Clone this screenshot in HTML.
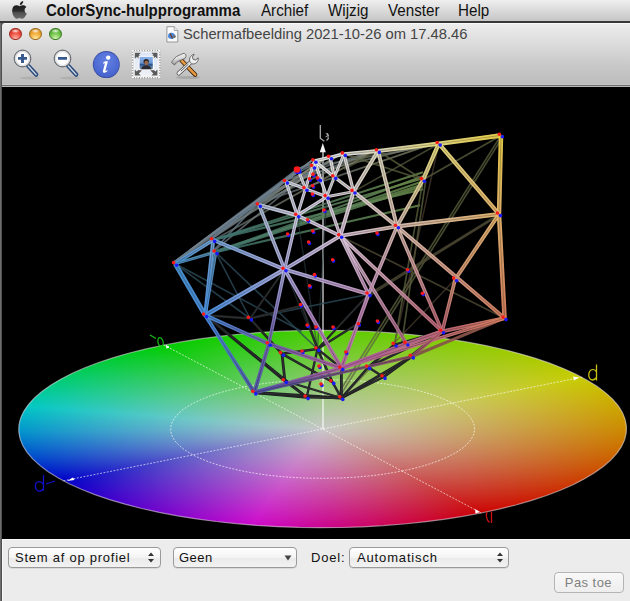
<!DOCTYPE html>
<html><head><meta charset="utf-8"><style>
*{margin:0;padding:0;box-sizing:border-box}
html,body{width:630px;height:601px;overflow:hidden;background:#6a6a6a;font-family:"Liberation Sans",sans-serif}
#menubar{position:absolute;left:0;top:0;width:630px;height:21px;background:linear-gradient(#efefef,#dadada 50%,#c6c6c6)}
#menuline{position:absolute;left:0;top:21px;width:630px;height:2px;background:#383838}
.mi{position:absolute;top:2px;font-size:16px;color:#111;line-height:18px;white-space:nowrap;transform-origin:0 0;transform:scaleX(0.948)}
#leftstrip{position:absolute;left:0;top:23px;width:2px;height:578px;background:linear-gradient(90deg,#6e6e6e 0,#6e6e6e 1px,#505050 1px)}
#win{position:absolute;left:2px;top:23px;width:640px;height:578px;border-radius:4px 4px 0 0;overflow:hidden;background:#ececec}
#toolbar{position:absolute;left:0;top:0;width:100%;height:61px;background:linear-gradient(#ededed 0,#e2e2e2 20%,#c8c8c8 70%,#bcbcbc 100%);border-top:1px solid #fafafa}
#tbl1{position:absolute;left:0;top:60px;width:100%;height:1px;background:#c4c4c4}
#tbl2{position:absolute;left:0;top:61px;width:100%;height:1px;background:#6e6e6e}
#tbl3{position:absolute;left:0;top:62px;width:100%;height:2px;background:#b4b4b4}
#canvas{position:absolute;left:0;top:64px;width:100%;height:452px;background:#000;overflow:hidden}
#bottom{position:absolute;left:0;top:516px;width:100%;height:62px;background:#ececec;border-left:1px solid #f8f8f8;border-top:1px solid #fafafa}
.btn{position:absolute;border-radius:4px;border:1px solid #9a9a9a;background:linear-gradient(#ffffff,#f4f4f4 50%,#eaeaea 51%,#f2f2f2);box-shadow:0 0.5px 0.5px rgba(0,0,0,0.15)}
.bt{position:absolute;font-size:13px;color:#111;line-height:15px;white-space:nowrap}
.tl{position:absolute;top:3.5px;width:12.5px;height:12.5px;border-radius:50%}
</style></head><body>
<div id="menubar">
 <svg style="position:absolute;left:0;top:0" width="40" height="22" viewBox="0 0 40 22"><defs><linearGradient id="apg" x1="0" y1="0" x2="0" y2="1"><stop offset="0" stop-color="#1c1c1c"/><stop offset="0.42" stop-color="#2c2c2c"/><stop offset="0.55" stop-color="#505050"/><stop offset="1" stop-color="#6c6c6c"/></linearGradient></defs><path d="M19.5 6.3C17.5 4.8 13.8 4.8 12.6 8.0C11.6 10.8 12.3 14.5 14.2 17.0C15.3 18.6 16.5 19.2 17.8 18.6C18.8 18.1 20.2 18.1 21.2 18.6C22.5 19.2 23.7 18.6 24.8 17.0C25.6 15.8 26.3 14.7 26.9 13.6C24.4 12.6 23.6 8.6 26.4 6.9C25.0 4.9 21.8 4.8 19.5 6.3Z" fill="url(#apg)"/><path d="M19.8 5.0C19.6 3.0 21.0 1.2 23.3 0.9C23.3 3.0 21.9 4.7 19.8 5.0Z" fill="#1c1c1c"/></svg>
 <div class="mi" style="left:46px;font-weight:bold;transform:scaleX(0.938)">ColorSync-hulpprogramma</div>
 <div class="mi" style="left:261px">Archief</div>
 <div class="mi" style="left:328px">Wijzig</div>
 <div class="mi" style="left:388px">Venster</div>
 <div class="mi" style="left:458px">Help</div>
</div>
<div id="menuline"></div>
<div id="leftstrip"></div>
<div id="win">
 <div id="toolbar">
  <div class="tl" style="left:7.2px;background:radial-gradient(ellipse 40% 22% at 50% 20%,rgba(255,255,255,0.9),rgba(255,255,255,0)),radial-gradient(circle at 50% 95%,#ffb4a8 0,#ee4a3c 55%,#c02818 100%);border:0.6px solid #9a2a20"></div>
  <div class="tl" style="left:27.2px;background:radial-gradient(ellipse 40% 22% at 50% 20%,rgba(255,255,255,0.9),rgba(255,255,255,0)),radial-gradient(circle at 50% 95%,#ffe8a0 0,#f0a830 55%,#c07a10 100%);border:0.6px solid #9a6a20"></div>
  <div class="tl" style="left:47.2px;background:radial-gradient(ellipse 40% 22% at 50% 20%,rgba(255,255,255,0.9),rgba(255,255,255,0)),radial-gradient(circle at 50% 95%,#d4f8b0 0,#6cc044 55%,#3a9a20 100%);border:0.6px solid #3a7a22"></div>
  <svg style="position:absolute;left:164px;top:2px" width="14" height="17" viewBox="0 0 14 17"><path d="M0.9 0.7h7.3l3.6 3.8v11.5h-10.9z" fill="#fbfbfb" stroke="#8c8c8c" stroke-width="0.9"/><path d="M8.2 0.7v3.8h3.6" fill="#e8e8e8" stroke="#9a9a9a" stroke-width="0.8"/><path d="M2.2 8.5c1-1.5 3-2.2 4.8-1.4 1.2 0.5 2.5 1.8 2.2 3.2-0.3 1.6-1.8 2.6-3.4 2.6-1.8 0-3.6-0.6-3.8-2.2z" fill="#4a88e0"/><path d="M4 7.4l2.6 5" stroke="#6a4028" stroke-width="1.2"/><ellipse cx="8.3" cy="10.6" rx="1.6" ry="1.4" fill="#707070"/></svg>
  <div style="position:absolute;left:180.5px;top:1px;font-size:15px;letter-spacing:0px;color:#444;line-height:17px;white-space:nowrap;transform-origin:0 0;transform:scaleX(0.983)">Schermafbeelding 2021-10-26 om 17.48.46</div>
  <!-- zoom in -->
  <svg style="position:absolute;left:10px;top:24px" width="32" height="32" viewBox="0 0 32 32">
   <ellipse cx="18" cy="30" rx="10" ry="1.5" fill="rgba(0,0,0,0.08)"/>
   <path d="M16.3 18L24.2 26.6" stroke="#2e4c7c" stroke-width="4.4" stroke-linecap="round"/><path d="M16.3 18L24.2 26.6" stroke="#d8e0ea" stroke-width="1.3" stroke-linecap="round"/>
   <circle cx="10.5" cy="10.5" r="8.3" fill="#fdfdfd" stroke="#6a6e74" stroke-width="1.2"/><circle cx="10.5" cy="10.5" r="7" fill="none" stroke="#dadcde" stroke-width="1.2"/>
   <path d="M6 10.4h9M10.5 5.9v9" stroke="#34578e" stroke-width="2.9"/>
  </svg>
  <svg style="position:absolute;left:50px;top:24px" width="32" height="32" viewBox="0 0 32 32">
   <ellipse cx="18" cy="30" rx="10" ry="1.5" fill="rgba(0,0,0,0.08)"/>
   <path d="M16.3 18L24.2 26.6" stroke="#2e4c7c" stroke-width="4.4" stroke-linecap="round"/><path d="M16.3 18L24.2 26.6" stroke="#d8e0ea" stroke-width="1.3" stroke-linecap="round"/>
   <circle cx="10.5" cy="10.5" r="8.3" fill="#fdfdfd" stroke="#6a6e74" stroke-width="1.2"/><circle cx="10.5" cy="10.5" r="7" fill="none" stroke="#dadcde" stroke-width="1.2"/>
   <path d="M6 10.4h9" stroke="#34578e" stroke-width="2.9"/>
  </svg>
  <svg style="position:absolute;left:90px;top:26.2px" width="30" height="30" viewBox="0 0 30 30">
   <circle cx="14.3" cy="14.6" r="13.5" fill="#3a4ea0"/><circle cx="14.3" cy="14.6" r="12.7" fill="url(#infog)"/>
   <defs><radialGradient id="infog" cx="50%" cy="35%" r="65%"><stop offset="0" stop-color="#6482e4"/><stop offset="1" stop-color="#4462cc"/></radialGradient></defs>
   <circle cx="16.2" cy="7.6" r="2.2" fill="#fff"/>
   <path d="M11.3 12.6c1.2-1.2 3.2-1.6 4.6-1.2l-2.4 8.8c-0.2 0.8 0.4 1 1.8-0.2l0.2 0.9c-1.6 1.8-5.2 2.8-4.6 0.2l2-7.6c-0.4-0.4-1 0-1.6 0.4z" fill="#fff"/>
  </svg>
  <!-- stamp -->
  <svg style="position:absolute;left:128px;top:25px" width="32" height="31" viewBox="0 0 32 31">
   <defs><linearGradient id="stg" x1="0" y1="0" x2="0" y2="1"><stop offset="0" stop-color="#dce6f6"/><stop offset="1" stop-color="#eef0f4"/></linearGradient>
   <linearGradient id="phg" x1="0" y1="0" x2="0" y2="1"><stop offset="0" stop-color="#8cb2ea"/><stop offset="0.5" stop-color="#6a94d0"/><stop offset="0.62" stop-color="#2a5490"/><stop offset="1" stop-color="#8a9ab0"/></linearGradient></defs>
   <rect x="1.9" y="0.9" width="28.4" height="28.4" fill="#747474"/>
   <g fill="#fafafa"><circle cx="3.0" cy="1.6" r="1"/><circle cx="3.0" cy="28.6" r="1"/><circle cx="2.6" cy="2.0" r="1"/><circle cx="29.6" cy="2.0" r="1"/><circle cx="5.6" cy="1.6" r="1"/><circle cx="5.6" cy="28.6" r="1"/><circle cx="2.6" cy="4.6" r="1"/><circle cx="29.6" cy="4.6" r="1"/><circle cx="8.2" cy="1.6" r="1"/><circle cx="8.2" cy="28.6" r="1"/><circle cx="2.6" cy="7.2" r="1"/><circle cx="29.6" cy="7.2" r="1"/><circle cx="10.8" cy="1.6" r="1"/><circle cx="10.8" cy="28.6" r="1"/><circle cx="2.6" cy="9.8" r="1"/><circle cx="29.6" cy="9.8" r="1"/><circle cx="13.4" cy="1.6" r="1"/><circle cx="13.4" cy="28.6" r="1"/><circle cx="2.6" cy="12.4" r="1"/><circle cx="29.6" cy="12.4" r="1"/><circle cx="16.0" cy="1.6" r="1"/><circle cx="16.0" cy="28.6" r="1"/><circle cx="2.6" cy="15.0" r="1"/><circle cx="29.6" cy="15.0" r="1"/><circle cx="18.6" cy="1.6" r="1"/><circle cx="18.6" cy="28.6" r="1"/><circle cx="2.6" cy="17.6" r="1"/><circle cx="29.6" cy="17.6" r="1"/><circle cx="21.2" cy="1.6" r="1"/><circle cx="21.2" cy="28.6" r="1"/><circle cx="2.6" cy="20.2" r="1"/><circle cx="29.6" cy="20.2" r="1"/><circle cx="23.8" cy="1.6" r="1"/><circle cx="23.8" cy="28.6" r="1"/><circle cx="2.6" cy="22.8" r="1"/><circle cx="29.6" cy="22.8" r="1"/><circle cx="26.4" cy="1.6" r="1"/><circle cx="26.4" cy="28.6" r="1"/><circle cx="2.6" cy="25.4" r="1"/><circle cx="29.6" cy="25.4" r="1"/><circle cx="29.0" cy="1.6" r="1"/><circle cx="29.0" cy="28.6" r="1"/><circle cx="2.6" cy="28.0" r="1"/><circle cx="29.6" cy="28.0" r="1"/></g>
   <rect x="3.3" y="2.3" width="25.6" height="25.6" fill="#fafafa"/>
   <rect x="4.6" y="3.6" width="23" height="23" fill="url(#stg)"/>
   <g fill="#5a5a5a"><path d="M4.8 3.8h6l-2 2 3 3-2 2-3-3-2 2z"/><path d="M27.4 3.8h-6l2 2-3 3 2 2 3-3 2 2z"/><path d="M4.8 26.4h6l-2-2 3-3-2-2-3 3-2-2z"/><path d="M27.4 26.4h-6l2-2-3-3 2-2 3 3 2-2z"/></g>
   <rect x="8.6" y="6.8" width="15.2" height="14.4" fill="#fff"/>
   <rect x="9.6" y="7.8" width="13.2" height="12.4" fill="url(#phg)"/>
   <ellipse cx="16.2" cy="12.6" rx="2.7" ry="2.6" fill="#2a2420"/><ellipse cx="16.4" cy="14" rx="2.1" ry="2.2" fill="#9a6a50"/>
   <path d="M11.2 20.2c0.5-2.6 2.4-4 5-4s4.6 1.4 5.4 4z" fill="#2a2a30"/>
  </svg>
  <!-- tools -->
  <svg style="position:absolute;left:168px;top:26px" width="34" height="30" viewBox="0 0 34 30">
   <defs><linearGradient id="hmg" x1="0" y1="0" x2="0.3" y2="1"><stop offset="0" stop-color="#fafafa"/><stop offset="0.5" stop-color="#e0e0e0"/><stop offset="1" stop-color="#8a8a8a"/></linearGradient>
   <linearGradient id="hdg" x1="0" y1="0" x2="1" y2="-1"><stop offset="0" stop-color="#e89a40"/><stop offset="1" stop-color="#8a4a10"/></linearGradient></defs>
   <ellipse cx="18" cy="27.5" rx="12" ry="1.6" fill="rgba(0,0,0,0.12)"/>
   <path d="M11.5 10.5L25.2 24.7" stroke="#3a2008" stroke-width="4.2" stroke-linecap="round"/>
   <path d="M11.5 10.5L25.2 24.7" stroke="url(#hdg)" stroke-width="2.6" stroke-linecap="round"/>
   <path d="M6.5 6.5L13 3.5C15 3 16.3 4.5 16 6.5L15 8.5L9 11C7 12 5.5 13.5 4.5 15L1.5 12.5C3 10 4.5 8 6.5 6.5Z" fill="url(#hmg)" stroke="#4a4a4a" stroke-width="0.7"/>
   <path d="M8.7 23.4L21.5 11.5" stroke="#4a4a4a" stroke-width="4.2" stroke-linecap="round"/>
   <path d="M8.7 23.4L21.5 11.5" stroke="#ececec" stroke-width="2.8" stroke-linecap="round"/>
   <path d="M10.8 21.2L18.5 14" stroke="#3a3a3a" stroke-width="0.8"/>
   <path d="M20.5 12.8C18.3 9.6 20 5.2 24.2 4.2L22.4 6.9L23.2 9.4L25.8 10L28.2 7.8C28.8 11.5 25.6 14.8 21.6 13.8Z" fill="#efefef" stroke="#4a4a4a" stroke-width="0.8"/>
  </svg>
  <div id="tbl1"></div><div id="tbl2"></div><div id="tbl3"></div>
 </div>
 <div id="canvas"></div>
 <div id="bottom">
  <div class="btn" style="left:5px;top:7px;width:153px;height:21px"></div>
  <div class="bt" style="left:12px;top:10px;letter-spacing:0.75px">Stem af op profiel</div>
  <svg style="position:absolute;left:144px;top:12px" width="8" height="11" viewBox="0 0 8 11"><path d="M4 0.5l3 3.5h-6zM4 10.5l3-3.5h-6z" fill="#333"/></svg>
  <div class="btn" style="left:170px;top:7px;width:124px;height:21px"></div>
  <div class="bt" style="left:176px;top:10px;letter-spacing:0.5px">Geen</div>
  <svg style="position:absolute;left:281px;top:15px" width="8" height="6" viewBox="0 0 8 6"><path d="M0.5 0.5h7l-3.5 5z" fill="#444"/></svg>
  <div class="bt" style="left:308px;top:10px;letter-spacing:0.8px">Doel:</div>
  <div class="btn" style="left:346px;top:7px;width:160px;height:21px"></div>
  <div class="bt" style="left:354px;top:10px;letter-spacing:0.85px">Automatisch</div>
  <svg style="position:absolute;left:493px;top:12px" width="8" height="11" viewBox="0 0 8 11"><path d="M4 0.5l3 3.5h-6zM4 10.5l3-3.5h-6z" fill="#333"/></svg>
  <div class="btn" style="left:550.5px;top:32px;width:70px;height:21px;border-color:#b4b4b4;background:linear-gradient(#f8f8f8,#eeeeee);box-shadow:none"></div>
  <div class="bt" style="left:561.8px;top:35px;color:#808080;font-size:13px;letter-spacing:0.45px">Pas toe</div>
 </div>
</div>

<div style="position:absolute;left:2px;top:87px;width:628px;height:452px;overflow:hidden">
 <div style="position:absolute;left:-2px;top:-87px;width:630px;height:601px">
  <div style="position:absolute;left:-100px;top:-100px;width:200px;height:200px;border-radius:50%;transform-origin:100px 100px;transform:matrix(1.58700,0.84000,2.59200,-0.51800,322.60,429.00) translate(0px,0px);background:radial-gradient(circle closest-side,rgba(200,200,200,1) 0%,rgba(200,200,200,0) 100%),conic-gradient(rgb(0,0,200) 0deg, rgb(67,0,204) 15deg, rgb(133,4,204) 30deg, rgb(204,9,204) 45deg, rgb(204,4,138) 60deg, rgb(204,4,67) 75deg, rgb(204,4,4) 90deg, rgb(204,36,4) 105deg, rgb(204,71,2) 120deg, rgb(204,107,0) 135deg, rgb(204,142,0) 150deg, rgb(204,173,0) 165deg, rgb(200,204,0) 180deg, rgb(169,202,0) 195deg, rgb(138,204,0) 210deg, rgb(109,204,0) 225deg, rgb(78,204,0) 240deg, rgb(29,204,0) 255deg, rgb(0,204,0) 270deg, rgb(0,204,58) 285deg, rgb(0,204,124) 300deg, rgb(2,200,196) 315deg, rgb(2,147,204) 330deg, rgb(0,76,204) 345deg, rgb(0,0,200) 360deg);"></div>
  <svg style="position:absolute;left:0;top:0" width="630" height="601" viewBox="0 0 630 601">
   <defs><linearGradient id="g1" gradientUnits="userSpaceOnUse" x1="174.0" y1="262.2" x2="376.8" y2="149.4"><stop offset="0" stop-color="#60707e"/><stop offset="1" stop-color="#90906a"/></linearGradient><linearGradient id="g2" gradientUnits="userSpaceOnUse" x1="212.0" y1="238.4" x2="342.8" y2="152.5"><stop offset="0" stop-color="#60707e"/><stop offset="1" stop-color="#90906a"/></linearGradient><linearGradient id="g3" gradientUnits="userSpaceOnUse" x1="257.7" y1="203.4" x2="437.6" y2="142.1"><stop offset="0" stop-color="#60707e"/><stop offset="1" stop-color="#90906a"/></linearGradient><linearGradient id="g4" gradientUnits="userSpaceOnUse" x1="257.7" y1="203.4" x2="376.8" y2="149.4"><stop offset="0" stop-color="#60707e"/><stop offset="1" stop-color="#90906a"/></linearGradient><linearGradient id="g5" gradientUnits="userSpaceOnUse" x1="284.8" y1="180.1" x2="437.6" y2="142.1"><stop offset="0" stop-color="#60707e"/><stop offset="1" stop-color="#90906a"/></linearGradient><linearGradient id="g6" gradientUnits="userSpaceOnUse" x1="297.3" y1="169.1" x2="499.8" y2="133.8"><stop offset="0" stop-color="#60707e"/><stop offset="1" stop-color="#90906a"/></linearGradient><linearGradient id="g7" gradientUnits="userSpaceOnUse" x1="212.0" y1="238.4" x2="328.9" y2="155.8"><stop offset="0" stop-color="#60707e"/><stop offset="1" stop-color="#90906a"/></linearGradient><linearGradient id="g8" gradientUnits="userSpaceOnUse" x1="257.7" y1="203.4" x2="328.9" y2="155.8"><stop offset="0" stop-color="#60707e"/><stop offset="1" stop-color="#90906a"/></linearGradient><linearGradient id="g9" gradientUnits="userSpaceOnUse" x1="213.2" y1="240.0" x2="423.0" y2="172.2"><stop offset="0" stop-color="#3a7070"/><stop offset="1" stop-color="#6a8a48"/></linearGradient><linearGradient id="g10" gradientUnits="userSpaceOnUse" x1="213.2" y1="240.0" x2="423.0" y2="178.2"><stop offset="0" stop-color="#3a7070"/><stop offset="1" stop-color="#6a8a48"/></linearGradient><linearGradient id="g11" gradientUnits="userSpaceOnUse" x1="215.7" y1="252.2" x2="423.0" y2="176.2"><stop offset="0" stop-color="#3a7070"/><stop offset="1" stop-color="#6a8a48"/></linearGradient><linearGradient id="g12" gradientUnits="userSpaceOnUse" x1="215.7" y1="252.2" x2="423.0" y2="181.2"><stop offset="0" stop-color="#3a7070"/><stop offset="1" stop-color="#6a8a48"/></linearGradient><linearGradient id="g13" gradientUnits="userSpaceOnUse" x1="215.7" y1="252.2" x2="423.0" y2="186.2"><stop offset="0" stop-color="#3a7070"/><stop offset="1" stop-color="#6a8a48"/></linearGradient><linearGradient id="g14" gradientUnits="userSpaceOnUse" x1="175.2" y1="263.8" x2="423.0" y2="184.2"><stop offset="0" stop-color="#3a7070"/><stop offset="1" stop-color="#6a8a48"/></linearGradient><linearGradient id="g15" gradientUnits="userSpaceOnUse" x1="215.7" y1="252.2" x2="420.0" y2="205.2"><stop offset="0" stop-color="#3a7070"/><stop offset="1" stop-color="#6a8a48"/></linearGradient><linearGradient id="g16" gradientUnits="userSpaceOnUse" x1="213.2" y1="240.0" x2="423.0" y2="189.2"><stop offset="0" stop-color="#3a7070"/><stop offset="1" stop-color="#6a8a48"/></linearGradient><linearGradient id="g17" gradientUnits="userSpaceOnUse" x1="411.9" y1="356.5" x2="504.6" y2="318.2"><stop offset="0" stop-color="#7a4a48"/><stop offset="1" stop-color="#a06050"/></linearGradient><linearGradient id="g18" gradientUnits="userSpaceOnUse" x1="501.0" y1="135.4" x2="438.8" y2="143.7"><stop offset="0" stop-color="#ecd24a"/><stop offset="1" stop-color="#e8dc80"/></linearGradient><linearGradient id="g19" gradientUnits="userSpaceOnUse" x1="438.8" y1="143.7" x2="378.0" y2="151.0"><stop offset="0" stop-color="#e8dc80"/><stop offset="1" stop-color="#e0dcc0"/></linearGradient><linearGradient id="g20" gradientUnits="userSpaceOnUse" x1="378.0" y1="151.0" x2="344.0" y2="154.1"><stop offset="0" stop-color="#e0dcc0"/><stop offset="1" stop-color="#e4e4e0"/></linearGradient><linearGradient id="g21" gradientUnits="userSpaceOnUse" x1="344.0" y1="154.1" x2="330.1" y2="157.4"><stop offset="0" stop-color="#e4e4e0"/><stop offset="1" stop-color="#e8e8e8"/></linearGradient><linearGradient id="g22" gradientUnits="userSpaceOnUse" x1="330.1" y1="157.4" x2="314.5" y2="160.9"><stop offset="0" stop-color="#e8e8e8"/><stop offset="1" stop-color="#ececec"/></linearGradient><linearGradient id="g23" gradientUnits="userSpaceOnUse" x1="501.0" y1="135.4" x2="499.0" y2="214.2"><stop offset="0" stop-color="#ecd24a"/><stop offset="1" stop-color="#e8b870"/></linearGradient><linearGradient id="g24" gradientUnits="userSpaceOnUse" x1="438.8" y1="143.7" x2="499.0" y2="214.2"><stop offset="0" stop-color="#e8dc80"/><stop offset="1" stop-color="#e8b870"/></linearGradient><linearGradient id="g25" gradientUnits="userSpaceOnUse" x1="438.8" y1="143.7" x2="423.0" y2="179.8"><stop offset="0" stop-color="#e8dc80"/><stop offset="1" stop-color="#e0d090"/></linearGradient><linearGradient id="g26" gradientUnits="userSpaceOnUse" x1="423.0" y1="179.8" x2="397.0" y2="226.4"><stop offset="0" stop-color="#e0d090"/><stop offset="1" stop-color="#dcc0b4"/></linearGradient><linearGradient id="g27" gradientUnits="userSpaceOnUse" x1="378.0" y1="151.0" x2="353.6" y2="191.6"><stop offset="0" stop-color="#e0dcc0"/><stop offset="1" stop-color="#e0d4d4"/></linearGradient><linearGradient id="g28" gradientUnits="userSpaceOnUse" x1="378.0" y1="151.0" x2="397.0" y2="226.4"><stop offset="0" stop-color="#e0dcc0"/><stop offset="1" stop-color="#dcc0b4"/></linearGradient><linearGradient id="g29" gradientUnits="userSpaceOnUse" x1="344.0" y1="154.1" x2="353.6" y2="191.6"><stop offset="0" stop-color="#e4e4e0"/><stop offset="1" stop-color="#e0d4d4"/></linearGradient><linearGradient id="g30" gradientUnits="userSpaceOnUse" x1="397.0" y1="226.4" x2="499.0" y2="214.2"><stop offset="0" stop-color="#dcc0b4"/><stop offset="1" stop-color="#e8b870"/></linearGradient><linearGradient id="g31" gradientUnits="userSpaceOnUse" x1="353.6" y1="191.6" x2="397.0" y2="226.4"><stop offset="0" stop-color="#e0d4d4"/><stop offset="1" stop-color="#dcc0b4"/></linearGradient><linearGradient id="g32" gradientUnits="userSpaceOnUse" x1="499.0" y1="214.2" x2="455.2" y2="279.3"><stop offset="0" stop-color="#e8b870"/><stop offset="1" stop-color="#d89878"/></linearGradient><linearGradient id="g33" gradientUnits="userSpaceOnUse" x1="499.0" y1="214.2" x2="504.6" y2="318.2"><stop offset="0" stop-color="#e8b870"/><stop offset="1" stop-color="#d88060"/></linearGradient><linearGradient id="g34" gradientUnits="userSpaceOnUse" x1="397.0" y1="226.4" x2="504.6" y2="318.2"><stop offset="0" stop-color="#dcc0b4"/><stop offset="1" stop-color="#d88060"/></linearGradient><linearGradient id="g35" gradientUnits="userSpaceOnUse" x1="397.0" y1="226.4" x2="442.2" y2="331.4"><stop offset="0" stop-color="#dcc0b4"/><stop offset="1" stop-color="#c06878"/></linearGradient><linearGradient id="g36" gradientUnits="userSpaceOnUse" x1="455.2" y1="279.3" x2="442.2" y2="331.4"><stop offset="0" stop-color="#d89878"/><stop offset="1" stop-color="#c06878"/></linearGradient><linearGradient id="g37" gradientUnits="userSpaceOnUse" x1="442.2" y1="331.4" x2="504.6" y2="318.2"><stop offset="0" stop-color="#c06878"/><stop offset="1" stop-color="#d88060"/></linearGradient><linearGradient id="g38" gradientUnits="userSpaceOnUse" x1="368.6" y1="294.2" x2="397.0" y2="226.4"><stop offset="0" stop-color="#c898c0"/><stop offset="1" stop-color="#dcc0b4"/></linearGradient><linearGradient id="g39" gradientUnits="userSpaceOnUse" x1="340.3" y1="235.9" x2="397.0" y2="226.4"><stop offset="0" stop-color="#dcc8dc"/><stop offset="1" stop-color="#dcc0b4"/></linearGradient><linearGradient id="g40" gradientUnits="userSpaceOnUse" x1="340.3" y1="235.9" x2="353.6" y2="191.6"><stop offset="0" stop-color="#dcc8dc"/><stop offset="1" stop-color="#e0d4d4"/></linearGradient><linearGradient id="g41" gradientUnits="userSpaceOnUse" x1="340.3" y1="235.9" x2="442.2" y2="331.4"><stop offset="0" stop-color="#dcc8dc"/><stop offset="1" stop-color="#c06878"/></linearGradient><linearGradient id="g42" gradientUnits="userSpaceOnUse" x1="340.3" y1="235.9" x2="406.5" y2="343.6"><stop offset="0" stop-color="#dcc8dc"/><stop offset="1" stop-color="#b06888"/></linearGradient><linearGradient id="g43" gradientUnits="userSpaceOnUse" x1="340.3" y1="235.9" x2="284.6" y2="269.4"><stop offset="0" stop-color="#dcc8dc"/><stop offset="1" stop-color="#b0b0e4"/></linearGradient><linearGradient id="g44" gradientUnits="userSpaceOnUse" x1="340.3" y1="235.9" x2="297.3" y2="215.4"><stop offset="0" stop-color="#dcc8dc"/><stop offset="1" stop-color="#d8d4e8"/></linearGradient><linearGradient id="g45" gradientUnits="userSpaceOnUse" x1="340.3" y1="235.9" x2="326.7" y2="196.8"><stop offset="0" stop-color="#dcc8dc"/><stop offset="1" stop-color="#dcd8e4"/></linearGradient><linearGradient id="g46" gradientUnits="userSpaceOnUse" x1="340.3" y1="235.9" x2="368.6" y2="294.2"><stop offset="0" stop-color="#dcc8dc"/><stop offset="1" stop-color="#c898c0"/></linearGradient><linearGradient id="g47" gradientUnits="userSpaceOnUse" x1="284.6" y1="269.4" x2="368.6" y2="294.2"><stop offset="0" stop-color="#b0b0e4"/><stop offset="1" stop-color="#c898c0"/></linearGradient><linearGradient id="g48" gradientUnits="userSpaceOnUse" x1="368.6" y1="294.2" x2="341.4" y2="368.2"><stop offset="0" stop-color="#c898c0"/><stop offset="1" stop-color="#b060a0"/></linearGradient><linearGradient id="g49" gradientUnits="userSpaceOnUse" x1="284.6" y1="269.4" x2="341.4" y2="368.2"><stop offset="0" stop-color="#b0b0e4"/><stop offset="1" stop-color="#b060a0"/></linearGradient><linearGradient id="g50" gradientUnits="userSpaceOnUse" x1="258.9" y1="205.0" x2="297.3" y2="215.4"><stop offset="0" stop-color="#b0c0d4"/><stop offset="1" stop-color="#d8d4e8"/></linearGradient><linearGradient id="g51" gradientUnits="userSpaceOnUse" x1="258.9" y1="205.0" x2="284.6" y2="269.4"><stop offset="0" stop-color="#b0c0d4"/><stop offset="1" stop-color="#b0b0e4"/></linearGradient><linearGradient id="g52" gradientUnits="userSpaceOnUse" x1="297.3" y1="215.4" x2="284.6" y2="269.4"><stop offset="0" stop-color="#d8d4e8"/><stop offset="1" stop-color="#b0b0e4"/></linearGradient><linearGradient id="g53" gradientUnits="userSpaceOnUse" x1="286.0" y1="181.7" x2="297.3" y2="215.4"><stop offset="0" stop-color="#d4dae4"/><stop offset="1" stop-color="#d8d4e8"/></linearGradient><linearGradient id="g54" gradientUnits="userSpaceOnUse" x1="286.0" y1="181.7" x2="305.5" y2="188.8"><stop offset="0" stop-color="#d4dae4"/><stop offset="1" stop-color="#dcdae8"/></linearGradient><linearGradient id="g55" gradientUnits="userSpaceOnUse" x1="305.5" y1="188.8" x2="297.3" y2="215.4"><stop offset="0" stop-color="#dcdae8"/><stop offset="1" stop-color="#d8d4e8"/></linearGradient><linearGradient id="g56" gradientUnits="userSpaceOnUse" x1="305.5" y1="188.8" x2="326.7" y2="196.8"><stop offset="0" stop-color="#dcdae8"/><stop offset="1" stop-color="#dcd8e4"/></linearGradient><linearGradient id="g57" gradientUnits="userSpaceOnUse" x1="297.3" y1="215.4" x2="326.7" y2="196.8"><stop offset="0" stop-color="#d8d4e8"/><stop offset="1" stop-color="#dcd8e4"/></linearGradient><linearGradient id="g58" gradientUnits="userSpaceOnUse" x1="314.5" y1="160.9" x2="326.7" y2="196.8"><stop offset="0" stop-color="#ececec"/><stop offset="1" stop-color="#dcd8e4"/></linearGradient><linearGradient id="g59" gradientUnits="userSpaceOnUse" x1="314.5" y1="160.9" x2="334.3" y2="177.0"><stop offset="0" stop-color="#ececec"/><stop offset="1" stop-color="#e4e2e2"/></linearGradient><linearGradient id="g60" gradientUnits="userSpaceOnUse" x1="330.1" y1="157.4" x2="334.3" y2="177.0"><stop offset="0" stop-color="#e8e8e8"/><stop offset="1" stop-color="#e4e2e2"/></linearGradient><linearGradient id="g61" gradientUnits="userSpaceOnUse" x1="334.3" y1="177.0" x2="353.6" y2="191.6"><stop offset="0" stop-color="#e4e2e2"/><stop offset="1" stop-color="#e0d4d4"/></linearGradient><linearGradient id="g62" gradientUnits="userSpaceOnUse" x1="326.7" y1="196.8" x2="353.6" y2="191.6"><stop offset="0" stop-color="#dcd8e4"/><stop offset="1" stop-color="#e0d4d4"/></linearGradient><linearGradient id="g63" gradientUnits="userSpaceOnUse" x1="344.0" y1="154.1" x2="334.3" y2="177.0"><stop offset="0" stop-color="#e4e4e0"/><stop offset="1" stop-color="#e4e2e2"/></linearGradient><linearGradient id="g64" gradientUnits="userSpaceOnUse" x1="314.5" y1="160.9" x2="305.5" y2="188.8"><stop offset="0" stop-color="#ececec"/><stop offset="1" stop-color="#dcdae8"/></linearGradient><linearGradient id="g65" gradientUnits="userSpaceOnUse" x1="298.5" y1="170.7" x2="305.5" y2="188.8"><stop offset="0" stop-color="#d8dce4"/><stop offset="1" stop-color="#dcdae8"/></linearGradient><linearGradient id="g66" gradientUnits="userSpaceOnUse" x1="334.3" y1="177.0" x2="326.7" y2="196.8"><stop offset="0" stop-color="#e4e2e2"/><stop offset="1" stop-color="#dcd8e4"/></linearGradient><linearGradient id="g67" gradientUnits="userSpaceOnUse" x1="175.2" y1="263.8" x2="213.2" y2="240.0"><stop offset="0" stop-color="#4a94d0"/><stop offset="1" stop-color="#78a8dc"/></linearGradient><linearGradient id="g68" gradientUnits="userSpaceOnUse" x1="175.2" y1="263.8" x2="215.7" y2="252.2"><stop offset="0" stop-color="#4a94d0"/><stop offset="1" stop-color="#5a90b8"/></linearGradient><linearGradient id="g69" gradientUnits="userSpaceOnUse" x1="175.2" y1="263.8" x2="205.2" y2="315.2"><stop offset="0" stop-color="#4a94d0"/><stop offset="1" stop-color="#4a90e0"/></linearGradient><linearGradient id="g70" gradientUnits="userSpaceOnUse" x1="213.2" y1="240.0" x2="205.2" y2="315.2"><stop offset="0" stop-color="#78a8dc"/><stop offset="1" stop-color="#4a90e0"/></linearGradient><linearGradient id="g71" gradientUnits="userSpaceOnUse" x1="215.7" y1="252.2" x2="205.2" y2="315.2"><stop offset="0" stop-color="#5a90b8"/><stop offset="1" stop-color="#4a90e0"/></linearGradient><linearGradient id="g72" gradientUnits="userSpaceOnUse" x1="213.2" y1="240.0" x2="284.6" y2="269.4"><stop offset="0" stop-color="#78a8dc"/><stop offset="1" stop-color="#b0b0e4"/></linearGradient><linearGradient id="g73" gradientUnits="userSpaceOnUse" x1="205.2" y1="315.2" x2="284.6" y2="269.4"><stop offset="0" stop-color="#4a90e0"/><stop offset="1" stop-color="#b0b0e4"/></linearGradient><linearGradient id="g74" gradientUnits="userSpaceOnUse" x1="205.2" y1="315.2" x2="268.8" y2="343.9"><stop offset="0" stop-color="#4a90e0"/><stop offset="1" stop-color="#7060b0"/></linearGradient><linearGradient id="g75" gradientUnits="userSpaceOnUse" x1="268.8" y1="343.9" x2="341.4" y2="368.2"><stop offset="0" stop-color="#7060b0"/><stop offset="1" stop-color="#b060a0"/></linearGradient><linearGradient id="g76" gradientUnits="userSpaceOnUse" x1="284.6" y1="269.4" x2="268.8" y2="343.9"><stop offset="0" stop-color="#b0b0e4"/><stop offset="1" stop-color="#7060b0"/></linearGradient><linearGradient id="g77" gradientUnits="userSpaceOnUse" x1="268.8" y1="343.9" x2="254.4" y2="392.5"><stop offset="0" stop-color="#7060b0"/><stop offset="1" stop-color="#5050a8"/></linearGradient><linearGradient id="g78" gradientUnits="userSpaceOnUse" x1="205.2" y1="315.2" x2="254.4" y2="392.5"><stop offset="0" stop-color="#4a90e0"/><stop offset="1" stop-color="#5050a8"/></linearGradient><linearGradient id="g79" gradientUnits="userSpaceOnUse" x1="254.4" y1="392.5" x2="341.4" y2="368.2"><stop offset="0" stop-color="#5050a8"/><stop offset="1" stop-color="#b060a0"/></linearGradient><linearGradient id="g80" gradientUnits="userSpaceOnUse" x1="254.4" y1="392.5" x2="411.9" y2="356.5"><stop offset="0" stop-color="#5050a8"/><stop offset="1" stop-color="#905060"/></linearGradient><linearGradient id="g81" gradientUnits="userSpaceOnUse" x1="341.4" y1="368.2" x2="442.2" y2="331.4"><stop offset="0" stop-color="#b060a0"/><stop offset="1" stop-color="#c06878"/></linearGradient><linearGradient id="g82" gradientUnits="userSpaceOnUse" x1="341.4" y1="368.2" x2="504.6" y2="318.2"><stop offset="0" stop-color="#b060a0"/><stop offset="1" stop-color="#d88060"/></linearGradient><linearGradient id="g83" gradientUnits="userSpaceOnUse" x1="341.4" y1="368.2" x2="406.5" y2="343.6"><stop offset="0" stop-color="#b060a0"/><stop offset="1" stop-color="#b06888"/></linearGradient><linearGradient id="g84" gradientUnits="userSpaceOnUse" x1="406.5" y1="343.6" x2="442.2" y2="331.4"><stop offset="0" stop-color="#b06888"/><stop offset="1" stop-color="#c06878"/></linearGradient><linearGradient id="g85" gradientUnits="userSpaceOnUse" x1="411.9" y1="356.5" x2="442.2" y2="331.4"><stop offset="0" stop-color="#905060"/><stop offset="1" stop-color="#c06878"/></linearGradient></defs>
   <path d="M481.3,513.0 L499.0,509.2 L515.8,505.0 L531.7,500.4 L546.6,495.5 L560.4,490.2 L573.0,484.7 L584.4,478.8 L594.5,472.8 L603.3,466.5 L610.8,460.1 L616.8,453.4 L621.4,446.7 L624.6,439.9 L626.2,433.0 L626.4,426.1 L625.1,419.3 L622.4,412.4 L618.2,405.7 L612.5,399.1 L605.4,392.6 L597.0,386.3 L587.2,380.2 L576.1,374.3 L563.8,368.7 L550.3,363.4 L535.7,358.4 L520.1,353.8 L503.5,349.5 L486.0,345.6 L467.7,342.1 L448.7,339.1 L429.1,336.5 L409.0,334.3 L388.5,332.6 L367.6,331.4 L346.6,330.6 L325.4,330.3 L304.2,330.5 L283.0,331.2 L262.1,332.3 L241.5,334.0 L221.3,336.1 L201.5,338.6 L182.4,341.6 L163.9,345.0 L146.2,348.8 L129.4,353.0 L113.5,357.6 L98.6,362.5 L84.8,367.8 L72.2,373.3 L60.8,379.2 L50.7,385.2 L41.9,391.5 L34.4,397.9 L28.4,404.6 L23.8,411.3 L20.6,418.1 L19.0,425.0 L18.8,431.9 L20.1,438.7 L22.8,445.6 L27.0,452.3 L32.7,458.9 L39.8,465.4 L48.2,471.7 L58.0,477.8 L69.1,483.7 L81.4,489.3 L94.9,494.6 L109.5,499.6 L125.1,504.2 L141.7,508.5 L159.2,512.4 L177.5,515.9 L196.5,518.9 L216.1,521.5 L236.2,523.7 L256.7,525.4 L277.6,526.6 L298.6,527.4 L319.8,527.7 L341.0,527.5 L362.2,526.8 L383.1,525.7 L403.7,524.0 L423.9,521.9 L443.7,519.4 L462.8,516.4 L481.3,513.0Z" fill="none" stroke="rgba(235,225,235,0.55)" stroke-width="1.2"/>
   <path d="M402.0,471.0 L410.8,469.1 L419.2,467.0 L427.2,464.7 L434.6,462.2 L441.5,459.6 L447.8,456.8 L453.5,453.9 L458.6,450.9 L463.0,447.8 L466.7,444.5 L469.7,441.2 L472.0,437.9 L473.6,434.4 L474.4,431.0 L474.5,427.6 L473.9,424.1 L472.5,420.7 L470.4,417.3 L467.5,414.0 L464.0,410.8 L459.8,407.6 L454.9,404.6 L449.4,401.6 L443.2,398.9 L436.5,396.2 L429.2,393.7 L421.3,391.4 L413.0,389.3 L404.3,387.3 L395.2,385.6 L385.7,384.0 L375.9,382.7 L365.8,381.6 L355.5,380.8 L345.1,380.2 L334.6,379.8 L324.0,379.7 L313.4,379.8 L302.8,380.1 L292.4,380.7 L282.0,381.5 L271.9,382.5 L262.1,383.8 L252.5,385.3 L243.3,387.0 L234.4,388.9 L226.0,391.0 L218.0,393.3 L210.6,395.8 L203.7,398.4 L197.4,401.2 L191.7,404.1 L186.6,407.1 L182.2,410.2 L178.5,413.5 L175.5,416.8 L173.2,420.1 L171.6,423.6 L170.8,427.0 L170.7,430.4 L171.3,433.9 L172.7,437.3 L174.8,440.7 L177.7,444.0 L181.2,447.2 L185.4,450.4 L190.3,453.4 L195.8,456.4 L202.0,459.1 L208.7,461.8 L216.0,464.3 L223.9,466.6 L232.2,468.7 L240.9,470.7 L250.0,472.4 L259.5,474.0 L269.3,475.3 L279.4,476.4 L289.7,477.2 L300.1,477.8 L310.6,478.2 L321.2,478.3 L331.8,478.2 L342.4,477.9 L352.8,477.3 L363.2,476.5 L373.3,475.5 L383.1,474.2 L392.7,472.7 L401.9,471.0Z" fill="none" stroke="rgba(255,255,255,0.62)" stroke-width="1" stroke-dasharray="2 1.4"/>
   <line x1="163.9" y1="345.0" x2="481.3" y2="513.0" stroke="rgba(255,255,255,0.62)" stroke-width="1" stroke-dasharray="2 1.4"/>
   <line x1="63.4" y1="480.8" x2="581.8" y2="377.2" stroke="rgba(255,255,255,0.62)" stroke-width="1" stroke-dasharray="2 1.4"/>
   <line x1="323" y1="150" x2="323" y2="429" stroke="rgba(255,255,255,0.54)" stroke-width="2"/>
   <path d="M322.8 143l3 9.3h-6z" fill="#f4f4f4"/>
   <path d="M320.3 125v13.2l4 3" fill="none" stroke="#a8a8a8" stroke-width="1.3"/><path d="M325.8 133.5l2.6 1.2M325.6 136.8l3.2-1.6M326.2 140.2l2.8-1.8M327.3 133.2c1.2 2 1.2 5 0 7.3" fill="none" stroke="#b0b0b0" stroke-width="1"/>
   <line x1="174.0" y1="262.2" x2="257.7" y2="203.4" stroke="#6e808e" stroke-width="1.6" stroke-opacity="0.8"/><line x1="174.0" y1="262.2" x2="284.8" y2="180.1" stroke="#6e808e" stroke-width="1.6" stroke-opacity="0.8"/><line x1="212.0" y1="238.4" x2="297.3" y2="169.1" stroke="#6e808e" stroke-width="1.6" stroke-opacity="0.8"/><line x1="212.0" y1="238.4" x2="313.3" y2="159.3" stroke="#6e808e" stroke-width="1.6" stroke-opacity="0.8"/><line x1="257.7" y1="203.4" x2="313.3" y2="159.3" stroke="#6e808e" stroke-width="1.6" stroke-opacity="0.8"/><line x1="257.7" y1="203.4" x2="328.9" y2="155.8" stroke="#6e808e" stroke-width="1.6" stroke-opacity="0.8"/><line x1="284.8" y1="180.1" x2="328.9" y2="155.8" stroke="#6e808e" stroke-width="1.6" stroke-opacity="0.8"/><line x1="297.3" y1="169.1" x2="342.8" y2="152.5" stroke="#6e808e" stroke-width="1.6" stroke-opacity="0.8"/><line x1="174.0" y1="262.2" x2="313.3" y2="159.3" stroke="#6e808e" stroke-width="1.6" stroke-opacity="0.8"/><line x1="174.0" y1="262.2" x2="257.7" y2="203.4" stroke="#62788a" stroke-width="1.7" stroke-opacity="0.8"/><line x1="212.0" y1="238.4" x2="257.7" y2="203.4" stroke="#62788a" stroke-width="1.7" stroke-opacity="0.8"/><line x1="214.4" y1="249.6" x2="257.7" y2="203.4" stroke="#62788a" stroke-width="1.7" stroke-opacity="0.8"/><line x1="174.0" y1="262.2" x2="284.8" y2="180.1" stroke="#62788a" stroke-width="1.7" stroke-opacity="0.8"/><line x1="212.0" y1="238.4" x2="284.8" y2="180.1" stroke="#62788a" stroke-width="1.7" stroke-opacity="0.8"/><line x1="174.0" y1="262.2" x2="297.3" y2="169.1" stroke="#62788a" stroke-width="1.7" stroke-opacity="0.8"/><line x1="284.8" y1="180.1" x2="376.8" y2="149.4" stroke="#7a848a" stroke-width="1.6" stroke-opacity="0.7"/><line x1="297.3" y1="169.1" x2="342.8" y2="152.5" stroke="#7a848a" stroke-width="1.6" stroke-opacity="0.7"/><line x1="257.7" y1="203.4" x2="342.8" y2="152.5" stroke="#7a848a" stroke-width="1.6" stroke-opacity="0.7"/><line x1="270.4" y1="191.6" x2="376.8" y2="149.4" stroke="#7a848a" stroke-width="1.6" stroke-opacity="0.7"/><line x1="174.0" y1="262.2" x2="342.8" y2="152.5" stroke="#7a848a" stroke-width="1.6" stroke-opacity="0.7"/><line x1="214.4" y1="250.6" x2="328.9" y2="155.8" stroke="#7a848a" stroke-width="1.6" stroke-opacity="0.7"/><line x1="190.4" y1="249.6" x2="313.3" y2="159.3" stroke="#7a848a" stroke-width="1.6" stroke-opacity="0.7"/><line x1="174.0" y1="262.2" x2="376.8" y2="149.4" stroke="url(#g1)" stroke-width="1.8" stroke-opacity="0.7"/><line x1="212.0" y1="238.4" x2="342.8" y2="152.5" stroke="url(#g2)" stroke-width="1.8" stroke-opacity="0.7"/><line x1="257.7" y1="203.4" x2="437.6" y2="142.1" stroke="url(#g3)" stroke-width="1.8" stroke-opacity="0.7"/><line x1="257.7" y1="203.4" x2="376.8" y2="149.4" stroke="url(#g4)" stroke-width="1.8" stroke-opacity="0.7"/><line x1="284.8" y1="180.1" x2="437.6" y2="142.1" stroke="url(#g5)" stroke-width="1.8" stroke-opacity="0.7"/><line x1="297.3" y1="169.1" x2="499.8" y2="133.8" stroke="url(#g6)" stroke-width="1.8" stroke-opacity="0.7"/><line x1="212.0" y1="238.4" x2="328.9" y2="155.8" stroke="url(#g7)" stroke-width="1.8" stroke-opacity="0.7"/><line x1="257.7" y1="203.4" x2="328.9" y2="155.8" stroke="url(#g8)" stroke-width="1.8" stroke-opacity="0.7"/><line x1="213.2" y1="240.0" x2="423.0" y2="172.2" stroke="url(#g9)" stroke-width="2.0" stroke-opacity="0.85"/><line x1="213.2" y1="240.0" x2="423.0" y2="178.2" stroke="url(#g10)" stroke-width="2.0" stroke-opacity="0.85"/><line x1="215.7" y1="252.2" x2="423.0" y2="176.2" stroke="url(#g11)" stroke-width="2.0" stroke-opacity="0.85"/><line x1="215.7" y1="252.2" x2="423.0" y2="181.2" stroke="url(#g12)" stroke-width="2.0" stroke-opacity="0.85"/><line x1="215.7" y1="252.2" x2="423.0" y2="186.2" stroke="url(#g13)" stroke-width="2.0" stroke-opacity="0.85"/><line x1="175.2" y1="263.8" x2="423.0" y2="184.2" stroke="url(#g14)" stroke-width="2.0" stroke-opacity="0.85"/><line x1="215.7" y1="252.2" x2="420.0" y2="205.2" stroke="url(#g15)" stroke-width="2.0" stroke-opacity="0.85"/><line x1="213.2" y1="240.0" x2="423.0" y2="189.2" stroke="url(#g16)" stroke-width="2.0" stroke-opacity="0.85"/><line x1="438.8" y1="143.7" x2="353.6" y2="191.6" stroke="#5a6040" stroke-width="1.6" stroke-opacity="0.7"/><line x1="378.0" y1="151.0" x2="344.0" y2="169.2" stroke="#5a6040" stroke-width="1.6" stroke-opacity="0.7"/><line x1="501.0" y1="135.4" x2="423.0" y2="179.8" stroke="#5e6440" stroke-width="1.7" stroke-opacity="0.75"/><line x1="438.8" y1="143.7" x2="423.0" y2="179.8" stroke="#5e6440" stroke-width="1.7" stroke-opacity="0.75"/><line x1="378.0" y1="151.0" x2="423.0" y2="179.8" stroke="#5e6440" stroke-width="1.7" stroke-opacity="0.75"/><line x1="344.0" y1="154.1" x2="423.0" y2="179.8" stroke="#5e6440" stroke-width="1.7" stroke-opacity="0.75"/><line x1="423.0" y1="179.8" x2="394.6" y2="344.2" stroke="#5e6440" stroke-width="1.7" stroke-opacity="0.75"/><line x1="425.6" y1="181.2" x2="401.6" y2="344.2" stroke="#5e6440" stroke-width="1.7" stroke-opacity="0.75"/><line x1="501.0" y1="135.4" x2="336.6" y2="396.2" stroke="#5e6440" stroke-width="1.7" stroke-opacity="0.75"/><line x1="503.0" y1="136.4" x2="339.2" y2="397.2" stroke="#5e6440" stroke-width="1.7" stroke-opacity="0.75"/><line x1="455.2" y1="279.3" x2="341.6" y2="398.2" stroke="#5a4a38" stroke-width="1.5" stroke-opacity="0.6"/><line x1="438.8" y1="143.7" x2="394.6" y2="344.2" stroke="#5a4a38" stroke-width="1.5" stroke-opacity="0.6"/><line x1="411.9" y1="356.5" x2="504.6" y2="318.2" stroke="url(#g17)" stroke-width="3.0" stroke-opacity="0.9"/><line x1="499.0" y1="214.2" x2="368.6" y2="294.2" stroke="#4e4a34" stroke-width="1.7" stroke-opacity="0.8"/><line x1="497.6" y1="216.2" x2="367.6" y2="296.7" stroke="#4e4a34" stroke-width="1.7" stroke-opacity="0.8"/><line x1="340.3" y1="235.9" x2="504.6" y2="318.2" stroke="#4e4a34" stroke-width="1.7" stroke-opacity="0.8"/><line x1="175.2" y1="263.8" x2="250.0" y2="318.5" stroke="#2a4a58" stroke-width="1.6" stroke-opacity="0.8"/><line x1="175.2" y1="263.8" x2="301.6" y2="331.2" stroke="#2a4a58" stroke-width="1.6" stroke-opacity="0.8"/><line x1="215.6" y1="252.2" x2="250.0" y2="318.5" stroke="#2a4a58" stroke-width="1.6" stroke-opacity="0.8"/><line x1="250.0" y1="318.5" x2="368.6" y2="294.2" stroke="#2a4a58" stroke-width="1.6" stroke-opacity="0.8"/><line x1="215.6" y1="252.2" x2="317.5" y2="349.0" stroke="#2a4a58" stroke-width="1.6" stroke-opacity="0.8"/><line x1="205.2" y1="315.2" x2="250.0" y2="318.5" stroke="#2a4a58" stroke-width="1.6" stroke-opacity="0.8"/><line x1="258.9" y1="205.0" x2="284.6" y2="269.4" stroke="#2a3a40" stroke-width="1.4" stroke-opacity="0.6"/><line x1="297.3" y1="215.4" x2="317.5" y2="349.0" stroke="#2a3a40" stroke-width="1.4" stroke-opacity="0.6"/><line x1="326.7" y1="196.8" x2="317.5" y2="349.0" stroke="#2a3a40" stroke-width="1.4" stroke-opacity="0.6"/><line x1="284.6" y1="269.4" x2="317.5" y2="349.0" stroke="#2a3a40" stroke-width="1.4" stroke-opacity="0.6"/><line x1="254.4" y1="392.5" x2="306.7" y2="397.2" stroke="#1e2022" stroke-width="3.0"/><line x1="254.4" y1="392.5" x2="306.7" y2="397.2" stroke="#707070" stroke-width="0.6" stroke-opacity="0.35"/><line x1="254.4" y1="392.5" x2="341.4" y2="398.0" stroke="#1e2022" stroke-width="2.8"/><line x1="254.4" y1="392.5" x2="341.4" y2="398.0" stroke="#707070" stroke-width="0.6" stroke-opacity="0.35"/><line x1="282.0" y1="353.8" x2="284.9" y2="381.0" stroke="#1e2022" stroke-width="2.8"/><line x1="282.0" y1="353.8" x2="284.9" y2="381.0" stroke="#707070" stroke-width="0.6" stroke-opacity="0.35"/><line x1="282.0" y1="353.8" x2="332.4" y2="382.0" stroke="#1e2022" stroke-width="2.5"/><line x1="282.0" y1="353.8" x2="332.4" y2="382.0" stroke="#707070" stroke-width="0.6" stroke-opacity="0.35"/><line x1="250.0" y1="318.5" x2="282.0" y2="353.8" stroke="#1e2022" stroke-width="2.5"/><line x1="250.0" y1="318.5" x2="282.0" y2="353.8" stroke="#707070" stroke-width="0.6" stroke-opacity="0.35"/><line x1="205.2" y1="315.2" x2="284.9" y2="381.0" stroke="#1e2022" stroke-width="2.8"/><line x1="205.2" y1="315.2" x2="284.9" y2="381.0" stroke="#707070" stroke-width="0.6" stroke-opacity="0.35"/><line x1="205.2" y1="315.2" x2="306.7" y2="397.2" stroke="#1e2022" stroke-width="2.5"/><line x1="205.2" y1="315.2" x2="306.7" y2="397.2" stroke="#707070" stroke-width="0.6" stroke-opacity="0.35"/><line x1="284.9" y1="381.0" x2="306.7" y2="397.2" stroke="#1e2022" stroke-width="2.5"/><line x1="284.9" y1="381.0" x2="306.7" y2="397.2" stroke="#707070" stroke-width="0.6" stroke-opacity="0.35"/><line x1="284.9" y1="381.0" x2="341.4" y2="398.0" stroke="#1e2022" stroke-width="2.3"/><line x1="284.9" y1="381.0" x2="341.4" y2="398.0" stroke="#707070" stroke-width="0.6" stroke-opacity="0.35"/><line x1="306.7" y1="397.2" x2="341.4" y2="398.0" stroke="#1e2022" stroke-width="2.5"/><line x1="306.7" y1="397.2" x2="341.4" y2="398.0" stroke="#707070" stroke-width="0.6" stroke-opacity="0.35"/><line x1="341.4" y1="368.2" x2="341.4" y2="398.0" stroke="#1e2022" stroke-width="2.8"/><line x1="341.4" y1="368.2" x2="341.4" y2="398.0" stroke="#707070" stroke-width="0.6" stroke-opacity="0.35"/><line x1="332.4" y1="382.0" x2="341.4" y2="398.0" stroke="#1e2022" stroke-width="2.5"/><line x1="332.4" y1="382.0" x2="341.4" y2="398.0" stroke="#707070" stroke-width="0.6" stroke-opacity="0.35"/><line x1="341.4" y1="398.0" x2="368.2" y2="367.2" stroke="#1e2022" stroke-width="2.5"/><line x1="341.4" y1="398.0" x2="368.2" y2="367.2" stroke="#707070" stroke-width="0.6" stroke-opacity="0.35"/><line x1="341.4" y1="398.0" x2="383.6" y2="377.0" stroke="#1e2022" stroke-width="2.5"/><line x1="341.4" y1="398.0" x2="383.6" y2="377.0" stroke="#707070" stroke-width="0.6" stroke-opacity="0.35"/><line x1="341.4" y1="398.0" x2="411.9" y2="356.5" stroke="#1e2022" stroke-width="2.8"/><line x1="341.4" y1="398.0" x2="411.9" y2="356.5" stroke="#707070" stroke-width="0.6" stroke-opacity="0.35"/><line x1="368.2" y1="367.2" x2="383.6" y2="377.0" stroke="#1e2022" stroke-width="2.5"/><line x1="368.2" y1="367.2" x2="383.6" y2="377.0" stroke="#707070" stroke-width="0.6" stroke-opacity="0.35"/><line x1="383.6" y1="377.0" x2="411.9" y2="356.5" stroke="#1e2022" stroke-width="2.5"/><line x1="383.6" y1="377.0" x2="411.9" y2="356.5" stroke="#707070" stroke-width="0.6" stroke-opacity="0.35"/><line x1="368.2" y1="367.2" x2="442.2" y2="331.4" stroke="#1e2022" stroke-width="2.5"/><line x1="368.2" y1="367.2" x2="442.2" y2="331.4" stroke="#707070" stroke-width="0.6" stroke-opacity="0.35"/><line x1="394.7" y1="344.6" x2="442.2" y2="331.4" stroke="#1e2022" stroke-width="2.5"/><line x1="394.7" y1="344.6" x2="442.2" y2="331.4" stroke="#707070" stroke-width="0.6" stroke-opacity="0.35"/><line x1="394.7" y1="344.6" x2="368.2" y2="367.2" stroke="#1e2022" stroke-width="2.5"/><line x1="394.7" y1="344.6" x2="368.2" y2="367.2" stroke="#707070" stroke-width="0.6" stroke-opacity="0.35"/><line x1="317.5" y1="349.0" x2="341.4" y2="368.2" stroke="#1e2022" stroke-width="2.3"/><line x1="317.5" y1="349.0" x2="341.4" y2="368.2" stroke="#707070" stroke-width="0.6" stroke-opacity="0.35"/><line x1="317.5" y1="349.0" x2="332.4" y2="382.0" stroke="#1e2022" stroke-width="2.5"/><line x1="317.5" y1="349.0" x2="332.4" y2="382.0" stroke="#707070" stroke-width="0.6" stroke-opacity="0.35"/><line x1="284.6" y1="269.4" x2="250.0" y2="318.5" stroke="#1e2022" stroke-width="2.1"/><line x1="284.6" y1="269.4" x2="250.0" y2="318.5" stroke="#707070" stroke-width="0.6" stroke-opacity="0.35"/><line x1="282.0" y1="353.8" x2="317.5" y2="349.0" stroke="#1e2022" stroke-width="2.5"/><line x1="282.0" y1="353.8" x2="317.5" y2="349.0" stroke="#707070" stroke-width="0.6" stroke-opacity="0.35"/><line x1="383.6" y1="377.0" x2="442.2" y2="331.4" stroke="#1e2022" stroke-width="2.3"/><line x1="383.6" y1="377.0" x2="442.2" y2="331.4" stroke="#707070" stroke-width="0.6" stroke-opacity="0.35"/><line x1="205.2" y1="315.2" x2="250.0" y2="318.5" stroke="#1e2022" stroke-width="2.5"/><line x1="205.2" y1="315.2" x2="250.0" y2="318.5" stroke="#707070" stroke-width="0.6" stroke-opacity="0.35"/><line x1="250.0" y1="318.5" x2="302.0" y2="305.7" stroke="#1e2022" stroke-width="2.3"/><line x1="250.0" y1="318.5" x2="302.0" y2="305.7" stroke="#707070" stroke-width="0.6" stroke-opacity="0.35"/><line x1="302.0" y1="305.7" x2="317.5" y2="349.0" stroke="#1e2022" stroke-width="2.3"/><line x1="302.0" y1="305.7" x2="317.5" y2="349.0" stroke="#707070" stroke-width="0.6" stroke-opacity="0.35"/><line x1="317.5" y1="349.0" x2="361.6" y2="321.2" stroke="#1e2022" stroke-width="2.3"/><line x1="317.5" y1="349.0" x2="361.6" y2="321.2" stroke="#707070" stroke-width="0.6" stroke-opacity="0.35"/><line x1="368.6" y1="294.2" x2="317.5" y2="349.0" stroke="#1e2022" stroke-width="2.1"/><line x1="368.6" y1="294.2" x2="317.5" y2="349.0" stroke="#707070" stroke-width="0.6" stroke-opacity="0.35"/><line x1="317.5" y1="349.0" x2="306.7" y2="397.2" stroke="#1e2022" stroke-width="2.3"/><line x1="317.5" y1="349.0" x2="306.7" y2="397.2" stroke="#707070" stroke-width="0.6" stroke-opacity="0.35"/><line x1="501.0" y1="135.4" x2="438.8" y2="143.7" stroke="url(#g18)" stroke-width="4.5" stroke-opacity="0.95"/><line x1="501.0" y1="135.4" x2="438.8" y2="143.7" stroke="#000" stroke-width="0.7" stroke-opacity="0.35"/><line x1="438.8" y1="143.7" x2="378.0" y2="151.0" stroke="url(#g19)" stroke-width="4.2" stroke-opacity="0.95"/><line x1="438.8" y1="143.7" x2="378.0" y2="151.0" stroke="#000" stroke-width="0.7" stroke-opacity="0.35"/><line x1="378.0" y1="151.0" x2="344.0" y2="154.1" stroke="url(#g20)" stroke-width="3.9" stroke-opacity="0.95"/><line x1="378.0" y1="151.0" x2="344.0" y2="154.1" stroke="#000" stroke-width="0.7" stroke-opacity="0.35"/><line x1="344.0" y1="154.1" x2="330.1" y2="157.4" stroke="url(#g21)" stroke-width="3.3" stroke-opacity="0.95"/><line x1="344.0" y1="154.1" x2="330.1" y2="157.4" stroke="#000" stroke-width="0.7" stroke-opacity="0.35"/><line x1="330.1" y1="157.4" x2="314.5" y2="160.9" stroke="url(#g22)" stroke-width="3.3" stroke-opacity="0.95"/><line x1="330.1" y1="157.4" x2="314.5" y2="160.9" stroke="#000" stroke-width="0.7" stroke-opacity="0.35"/><line x1="501.0" y1="135.4" x2="499.0" y2="214.2" stroke="url(#g23)" stroke-width="4.5" stroke-opacity="0.95"/><line x1="501.0" y1="135.4" x2="499.0" y2="214.2" stroke="#000" stroke-width="0.7" stroke-opacity="0.35"/><line x1="438.8" y1="143.7" x2="499.0" y2="214.2" stroke="url(#g24)" stroke-width="4.2" stroke-opacity="0.95"/><line x1="438.8" y1="143.7" x2="499.0" y2="214.2" stroke="#000" stroke-width="0.7" stroke-opacity="0.35"/><line x1="438.8" y1="143.7" x2="423.0" y2="179.8" stroke="url(#g25)" stroke-width="4.2" stroke-opacity="0.95"/><line x1="438.8" y1="143.7" x2="423.0" y2="179.8" stroke="#000" stroke-width="0.7" stroke-opacity="0.35"/><line x1="423.0" y1="179.8" x2="397.0" y2="226.4" stroke="url(#g26)" stroke-width="3.9" stroke-opacity="0.95"/><line x1="423.0" y1="179.8" x2="397.0" y2="226.4" stroke="#000" stroke-width="0.7" stroke-opacity="0.35"/><line x1="378.0" y1="151.0" x2="353.6" y2="191.6" stroke="url(#g27)" stroke-width="3.9" stroke-opacity="0.95"/><line x1="378.0" y1="151.0" x2="353.6" y2="191.6" stroke="#000" stroke-width="0.7" stroke-opacity="0.35"/><line x1="378.0" y1="151.0" x2="397.0" y2="226.4" stroke="url(#g28)" stroke-width="3.9" stroke-opacity="0.95"/><line x1="378.0" y1="151.0" x2="397.0" y2="226.4" stroke="#000" stroke-width="0.7" stroke-opacity="0.35"/><line x1="344.0" y1="154.1" x2="353.6" y2="191.6" stroke="url(#g29)" stroke-width="3.3" stroke-opacity="0.95"/><line x1="344.0" y1="154.1" x2="353.6" y2="191.6" stroke="#000" stroke-width="0.7" stroke-opacity="0.35"/><line x1="397.0" y1="226.4" x2="499.0" y2="214.2" stroke="url(#g30)" stroke-width="4.2" stroke-opacity="0.95"/><line x1="397.0" y1="226.4" x2="499.0" y2="214.2" stroke="#000" stroke-width="0.7" stroke-opacity="0.35"/><line x1="353.6" y1="191.6" x2="397.0" y2="226.4" stroke="url(#g31)" stroke-width="3.9" stroke-opacity="0.95"/><line x1="353.6" y1="191.6" x2="397.0" y2="226.4" stroke="#000" stroke-width="0.7" stroke-opacity="0.35"/><line x1="499.0" y1="214.2" x2="455.2" y2="279.3" stroke="url(#g32)" stroke-width="3.9" stroke-opacity="0.95"/><line x1="499.0" y1="214.2" x2="455.2" y2="279.3" stroke="#000" stroke-width="0.7" stroke-opacity="0.35"/><line x1="499.0" y1="214.2" x2="504.6" y2="318.2" stroke="url(#g33)" stroke-width="4.5" stroke-opacity="0.95"/><line x1="499.0" y1="214.2" x2="504.6" y2="318.2" stroke="#000" stroke-width="0.7" stroke-opacity="0.35"/><line x1="397.0" y1="226.4" x2="504.6" y2="318.2" stroke="url(#g34)" stroke-width="3.9" stroke-opacity="0.95"/><line x1="397.0" y1="226.4" x2="504.6" y2="318.2" stroke="#000" stroke-width="0.7" stroke-opacity="0.35"/><line x1="397.0" y1="226.4" x2="442.2" y2="331.4" stroke="url(#g35)" stroke-width="3.6" stroke-opacity="0.95"/><line x1="397.0" y1="226.4" x2="442.2" y2="331.4" stroke="#000" stroke-width="0.7" stroke-opacity="0.35"/><line x1="455.2" y1="279.3" x2="442.2" y2="331.4" stroke="url(#g36)" stroke-width="3.6" stroke-opacity="0.95"/><line x1="455.2" y1="279.3" x2="442.2" y2="331.4" stroke="#000" stroke-width="0.7" stroke-opacity="0.35"/><line x1="442.2" y1="331.4" x2="504.6" y2="318.2" stroke="url(#g37)" stroke-width="3.9" stroke-opacity="0.95"/><line x1="442.2" y1="331.4" x2="504.6" y2="318.2" stroke="#000" stroke-width="0.7" stroke-opacity="0.35"/><line x1="368.6" y1="294.2" x2="397.0" y2="226.4" stroke="url(#g38)" stroke-width="3.6" stroke-opacity="0.95"/><line x1="368.6" y1="294.2" x2="397.0" y2="226.4" stroke="#000" stroke-width="0.7" stroke-opacity="0.35"/><line x1="340.3" y1="235.9" x2="397.0" y2="226.4" stroke="url(#g39)" stroke-width="3.9" stroke-opacity="0.95"/><line x1="340.3" y1="235.9" x2="397.0" y2="226.4" stroke="#000" stroke-width="0.7" stroke-opacity="0.35"/><line x1="340.3" y1="235.9" x2="353.6" y2="191.6" stroke="url(#g40)" stroke-width="3.9" stroke-opacity="0.95"/><line x1="340.3" y1="235.9" x2="353.6" y2="191.6" stroke="#000" stroke-width="0.7" stroke-opacity="0.35"/><line x1="340.3" y1="235.9" x2="442.2" y2="331.4" stroke="url(#g41)" stroke-width="3.6" stroke-opacity="0.95"/><line x1="340.3" y1="235.9" x2="442.2" y2="331.4" stroke="#000" stroke-width="0.7" stroke-opacity="0.35"/><line x1="340.3" y1="235.9" x2="406.5" y2="343.6" stroke="url(#g42)" stroke-width="3.6" stroke-opacity="0.95"/><line x1="340.3" y1="235.9" x2="406.5" y2="343.6" stroke="#000" stroke-width="0.7" stroke-opacity="0.35"/><line x1="340.3" y1="235.9" x2="284.6" y2="269.4" stroke="url(#g43)" stroke-width="3.9" stroke-opacity="0.95"/><line x1="340.3" y1="235.9" x2="284.6" y2="269.4" stroke="#000" stroke-width="0.7" stroke-opacity="0.35"/><line x1="340.3" y1="235.9" x2="297.3" y2="215.4" stroke="url(#g44)" stroke-width="3.6" stroke-opacity="0.95"/><line x1="340.3" y1="235.9" x2="297.3" y2="215.4" stroke="#000" stroke-width="0.7" stroke-opacity="0.35"/><line x1="340.3" y1="235.9" x2="326.7" y2="196.8" stroke="url(#g45)" stroke-width="3.3" stroke-opacity="0.95"/><line x1="340.3" y1="235.9" x2="326.7" y2="196.8" stroke="#000" stroke-width="0.7" stroke-opacity="0.35"/><line x1="340.3" y1="235.9" x2="368.6" y2="294.2" stroke="url(#g46)" stroke-width="3.6" stroke-opacity="0.95"/><line x1="340.3" y1="235.9" x2="368.6" y2="294.2" stroke="#000" stroke-width="0.7" stroke-opacity="0.35"/><line x1="284.6" y1="269.4" x2="368.6" y2="294.2" stroke="url(#g47)" stroke-width="3.9" stroke-opacity="0.95"/><line x1="284.6" y1="269.4" x2="368.6" y2="294.2" stroke="#000" stroke-width="0.7" stroke-opacity="0.35"/><line x1="368.6" y1="294.2" x2="341.4" y2="368.2" stroke="url(#g48)" stroke-width="3.9" stroke-opacity="0.95"/><line x1="368.6" y1="294.2" x2="341.4" y2="368.2" stroke="#000" stroke-width="0.7" stroke-opacity="0.35"/><line x1="284.6" y1="269.4" x2="341.4" y2="368.2" stroke="url(#g49)" stroke-width="3.9" stroke-opacity="0.95"/><line x1="284.6" y1="269.4" x2="341.4" y2="368.2" stroke="#000" stroke-width="0.7" stroke-opacity="0.35"/><line x1="258.9" y1="205.0" x2="297.3" y2="215.4" stroke="url(#g50)" stroke-width="3.9" stroke-opacity="0.95"/><line x1="258.9" y1="205.0" x2="297.3" y2="215.4" stroke="#000" stroke-width="0.7" stroke-opacity="0.35"/><line x1="258.9" y1="205.0" x2="284.6" y2="269.4" stroke="url(#g51)" stroke-width="3.6" stroke-opacity="0.95"/><line x1="258.9" y1="205.0" x2="284.6" y2="269.4" stroke="#000" stroke-width="0.7" stroke-opacity="0.35"/><line x1="297.3" y1="215.4" x2="284.6" y2="269.4" stroke="url(#g52)" stroke-width="3.3" stroke-opacity="0.95"/><line x1="297.3" y1="215.4" x2="284.6" y2="269.4" stroke="#000" stroke-width="0.7" stroke-opacity="0.35"/><line x1="286.0" y1="181.7" x2="297.3" y2="215.4" stroke="url(#g53)" stroke-width="3.3" stroke-opacity="0.95"/><line x1="286.0" y1="181.7" x2="297.3" y2="215.4" stroke="#000" stroke-width="0.7" stroke-opacity="0.35"/><line x1="286.0" y1="181.7" x2="305.5" y2="188.8" stroke="url(#g54)" stroke-width="3.3" stroke-opacity="0.95"/><line x1="286.0" y1="181.7" x2="305.5" y2="188.8" stroke="#000" stroke-width="0.7" stroke-opacity="0.35"/><line x1="305.5" y1="188.8" x2="297.3" y2="215.4" stroke="url(#g55)" stroke-width="3.0" stroke-opacity="0.95"/><line x1="305.5" y1="188.8" x2="297.3" y2="215.4" stroke="#000" stroke-width="0.7" stroke-opacity="0.35"/><line x1="305.5" y1="188.8" x2="326.7" y2="196.8" stroke="url(#g56)" stroke-width="3.3" stroke-opacity="0.95"/><line x1="305.5" y1="188.8" x2="326.7" y2="196.8" stroke="#000" stroke-width="0.7" stroke-opacity="0.35"/><line x1="297.3" y1="215.4" x2="326.7" y2="196.8" stroke="url(#g57)" stroke-width="3.3" stroke-opacity="0.95"/><line x1="297.3" y1="215.4" x2="326.7" y2="196.8" stroke="#000" stroke-width="0.7" stroke-opacity="0.35"/><line x1="314.5" y1="160.9" x2="326.7" y2="196.8" stroke="url(#g58)" stroke-width="3.3" stroke-opacity="0.95"/><line x1="314.5" y1="160.9" x2="326.7" y2="196.8" stroke="#000" stroke-width="0.7" stroke-opacity="0.35"/><line x1="314.5" y1="160.9" x2="334.3" y2="177.0" stroke="url(#g59)" stroke-width="3.3" stroke-opacity="0.95"/><line x1="314.5" y1="160.9" x2="334.3" y2="177.0" stroke="#000" stroke-width="0.7" stroke-opacity="0.35"/><line x1="330.1" y1="157.4" x2="334.3" y2="177.0" stroke="url(#g60)" stroke-width="3.3" stroke-opacity="0.95"/><line x1="330.1" y1="157.4" x2="334.3" y2="177.0" stroke="#000" stroke-width="0.7" stroke-opacity="0.35"/><line x1="334.3" y1="177.0" x2="353.6" y2="191.6" stroke="url(#g61)" stroke-width="3.3" stroke-opacity="0.95"/><line x1="334.3" y1="177.0" x2="353.6" y2="191.6" stroke="#000" stroke-width="0.7" stroke-opacity="0.35"/><line x1="326.7" y1="196.8" x2="353.6" y2="191.6" stroke="url(#g62)" stroke-width="3.0" stroke-opacity="0.95"/><line x1="326.7" y1="196.8" x2="353.6" y2="191.6" stroke="#000" stroke-width="0.7" stroke-opacity="0.35"/><line x1="344.0" y1="154.1" x2="334.3" y2="177.0" stroke="url(#g63)" stroke-width="3.0" stroke-opacity="0.95"/><line x1="344.0" y1="154.1" x2="334.3" y2="177.0" stroke="#000" stroke-width="0.7" stroke-opacity="0.35"/><line x1="314.5" y1="160.9" x2="305.5" y2="188.8" stroke="url(#g64)" stroke-width="3.0" stroke-opacity="0.95"/><line x1="314.5" y1="160.9" x2="305.5" y2="188.8" stroke="#000" stroke-width="0.7" stroke-opacity="0.35"/><line x1="298.5" y1="170.7" x2="305.5" y2="188.8" stroke="url(#g65)" stroke-width="3.0" stroke-opacity="0.95"/><line x1="298.5" y1="170.7" x2="305.5" y2="188.8" stroke="#000" stroke-width="0.7" stroke-opacity="0.35"/><line x1="334.3" y1="177.0" x2="326.7" y2="196.8" stroke="url(#g66)" stroke-width="3.0" stroke-opacity="0.95"/><line x1="334.3" y1="177.0" x2="326.7" y2="196.8" stroke="#000" stroke-width="0.7" stroke-opacity="0.35"/><line x1="175.2" y1="263.8" x2="213.2" y2="240.0" stroke="url(#g67)" stroke-width="3.6" stroke-opacity="0.95"/><line x1="175.2" y1="263.8" x2="213.2" y2="240.0" stroke="#000" stroke-width="0.7" stroke-opacity="0.35"/><line x1="175.2" y1="263.8" x2="215.7" y2="252.2" stroke="url(#g68)" stroke-width="2.7" stroke-opacity="0.95"/><line x1="175.2" y1="263.8" x2="215.7" y2="252.2" stroke="#000" stroke-width="0.7" stroke-opacity="0.35"/><line x1="175.2" y1="263.8" x2="205.2" y2="315.2" stroke="url(#g69)" stroke-width="4.8" stroke-opacity="0.95"/><line x1="175.2" y1="263.8" x2="205.2" y2="315.2" stroke="#000" stroke-width="0.7" stroke-opacity="0.35"/><line x1="213.2" y1="240.0" x2="205.2" y2="315.2" stroke="url(#g70)" stroke-width="3.9" stroke-opacity="0.95"/><line x1="213.2" y1="240.0" x2="205.2" y2="315.2" stroke="#000" stroke-width="0.7" stroke-opacity="0.35"/><line x1="215.7" y1="252.2" x2="205.2" y2="315.2" stroke="url(#g71)" stroke-width="3.3" stroke-opacity="0.95"/><line x1="215.7" y1="252.2" x2="205.2" y2="315.2" stroke="#000" stroke-width="0.7" stroke-opacity="0.35"/><line x1="213.2" y1="240.0" x2="284.6" y2="269.4" stroke="url(#g72)" stroke-width="3.9" stroke-opacity="0.95"/><line x1="213.2" y1="240.0" x2="284.6" y2="269.4" stroke="#000" stroke-width="0.7" stroke-opacity="0.35"/><line x1="205.2" y1="315.2" x2="284.6" y2="269.4" stroke="url(#g73)" stroke-width="4.5" stroke-opacity="0.95"/><line x1="205.2" y1="315.2" x2="284.6" y2="269.4" stroke="#000" stroke-width="0.7" stroke-opacity="0.35"/><line x1="205.2" y1="315.2" x2="268.8" y2="343.9" stroke="url(#g74)" stroke-width="3.9" stroke-opacity="0.95"/><line x1="205.2" y1="315.2" x2="268.8" y2="343.9" stroke="#000" stroke-width="0.7" stroke-opacity="0.35"/><line x1="268.8" y1="343.9" x2="341.4" y2="368.2" stroke="url(#g75)" stroke-width="3.9" stroke-opacity="0.95"/><line x1="268.8" y1="343.9" x2="341.4" y2="368.2" stroke="#000" stroke-width="0.7" stroke-opacity="0.35"/><line x1="284.6" y1="269.4" x2="268.8" y2="343.9" stroke="url(#g76)" stroke-width="3.6" stroke-opacity="0.95"/><line x1="284.6" y1="269.4" x2="268.8" y2="343.9" stroke="#000" stroke-width="0.7" stroke-opacity="0.35"/><line x1="268.8" y1="343.9" x2="254.4" y2="392.5" stroke="url(#g77)" stroke-width="3.9" stroke-opacity="0.95"/><line x1="268.8" y1="343.9" x2="254.4" y2="392.5" stroke="#000" stroke-width="0.7" stroke-opacity="0.35"/><line x1="205.2" y1="315.2" x2="254.4" y2="392.5" stroke="url(#g78)" stroke-width="3.9" stroke-opacity="0.95"/><line x1="205.2" y1="315.2" x2="254.4" y2="392.5" stroke="#000" stroke-width="0.7" stroke-opacity="0.35"/><line x1="254.4" y1="392.5" x2="341.4" y2="368.2" stroke="url(#g79)" stroke-width="3.9" stroke-opacity="0.95"/><line x1="254.4" y1="392.5" x2="341.4" y2="368.2" stroke="#000" stroke-width="0.7" stroke-opacity="0.35"/><line x1="254.4" y1="392.5" x2="411.9" y2="356.5" stroke="url(#g80)" stroke-width="3.0" stroke-opacity="0.95"/><line x1="254.4" y1="392.5" x2="411.9" y2="356.5" stroke="#000" stroke-width="0.7" stroke-opacity="0.35"/><line x1="341.4" y1="368.2" x2="442.2" y2="331.4" stroke="url(#g81)" stroke-width="4.5" stroke-opacity="0.95"/><line x1="341.4" y1="368.2" x2="442.2" y2="331.4" stroke="#000" stroke-width="0.7" stroke-opacity="0.35"/><line x1="341.4" y1="368.2" x2="504.6" y2="318.2" stroke="url(#g82)" stroke-width="3.3" stroke-opacity="0.95"/><line x1="341.4" y1="368.2" x2="504.6" y2="318.2" stroke="#000" stroke-width="0.7" stroke-opacity="0.35"/><line x1="341.4" y1="368.2" x2="406.5" y2="343.6" stroke="url(#g83)" stroke-width="3.6" stroke-opacity="0.95"/><line x1="341.4" y1="368.2" x2="406.5" y2="343.6" stroke="#000" stroke-width="0.7" stroke-opacity="0.35"/><line x1="406.5" y1="343.6" x2="442.2" y2="331.4" stroke="url(#g84)" stroke-width="3.6" stroke-opacity="0.95"/><line x1="406.5" y1="343.6" x2="442.2" y2="331.4" stroke="#000" stroke-width="0.7" stroke-opacity="0.35"/><line x1="411.9" y1="356.5" x2="442.2" y2="331.4" stroke="url(#g85)" stroke-width="3.3" stroke-opacity="0.95"/><line x1="411.9" y1="356.5" x2="442.2" y2="331.4" stroke="#000" stroke-width="0.7" stroke-opacity="0.35"/>
   <circle cx="502.4" cy="136.8" r="1.8" fill="#1a1aff"/><circle cx="499.4" cy="134.2" r="1.8" fill="#ff1a1a"/><circle cx="440.2" cy="145.1" r="1.8" fill="#1a1aff"/><circle cx="437.2" cy="142.5" r="1.8" fill="#ff1a1a"/><circle cx="379.4" cy="152.4" r="1.8" fill="#1a1aff"/><circle cx="376.4" cy="149.8" r="1.8" fill="#ff1a1a"/><circle cx="345.4" cy="155.5" r="1.8" fill="#1a1aff"/><circle cx="342.4" cy="152.9" r="1.8" fill="#ff1a1a"/><circle cx="331.5" cy="158.8" r="1.8" fill="#1a1aff"/><circle cx="328.5" cy="156.2" r="1.8" fill="#ff1a1a"/><circle cx="315.9" cy="162.3" r="1.8" fill="#1a1aff"/><circle cx="312.9" cy="159.7" r="1.8" fill="#ff1a1a"/><circle cx="299.9" cy="172.1" r="1.8" fill="#1a1aff"/><circle cx="296.9" cy="169.5" r="1.8" fill="#ff1a1a"/><circle cx="287.4" cy="183.1" r="1.8" fill="#1a1aff"/><circle cx="284.4" cy="180.5" r="1.8" fill="#ff1a1a"/><circle cx="260.3" cy="206.4" r="1.8" fill="#1a1aff"/><circle cx="257.3" cy="203.8" r="1.8" fill="#ff1a1a"/><circle cx="176.6" cy="265.2" r="1.8" fill="#1a1aff"/><circle cx="173.6" cy="262.6" r="1.8" fill="#ff1a1a"/><circle cx="206.6" cy="316.6" r="1.8" fill="#1a1aff"/><circle cx="203.6" cy="314.0" r="1.8" fill="#ff1a1a"/><circle cx="255.8" cy="393.9" r="1.8" fill="#1a1aff"/><circle cx="252.8" cy="391.3" r="1.8" fill="#ff1a1a"/><circle cx="342.8" cy="399.4" r="1.8" fill="#1a1aff"/><circle cx="339.8" cy="396.8" r="1.8" fill="#ff1a1a"/><circle cx="506.0" cy="319.6" r="1.8" fill="#1a1aff"/><circle cx="503.0" cy="317.0" r="1.8" fill="#ff1a1a"/><circle cx="500.4" cy="215.6" r="1.8" fill="#1a1aff"/><circle cx="497.4" cy="213.0" r="1.8" fill="#ff1a1a"/><circle cx="314.5" cy="168.0" r="1.8" fill="#1a1aff"/><circle cx="311.5" cy="165.4" r="1.8" fill="#ff1a1a"/><circle cx="320.5" cy="180.6" r="1.8" fill="#1a1aff"/><circle cx="317.5" cy="178.0" r="1.8" fill="#ff1a1a"/><circle cx="335.7" cy="178.4" r="1.8" fill="#1a1aff"/><circle cx="332.7" cy="175.8" r="1.8" fill="#ff1a1a"/><circle cx="306.9" cy="190.2" r="1.8" fill="#1a1aff"/><circle cx="303.9" cy="187.6" r="1.8" fill="#ff1a1a"/><circle cx="328.1" cy="198.2" r="1.8" fill="#1a1aff"/><circle cx="325.1" cy="195.6" r="1.8" fill="#ff1a1a"/><circle cx="355.0" cy="193.0" r="1.8" fill="#1a1aff"/><circle cx="352.0" cy="190.4" r="1.8" fill="#ff1a1a"/><circle cx="298.7" cy="216.8" r="1.8" fill="#1a1aff"/><circle cx="295.7" cy="214.2" r="1.8" fill="#ff1a1a"/><circle cx="341.7" cy="237.3" r="1.8" fill="#1a1aff"/><circle cx="338.7" cy="234.7" r="1.8" fill="#ff1a1a"/><circle cx="398.4" cy="227.8" r="1.8" fill="#1a1aff"/><circle cx="395.4" cy="225.2" r="1.8" fill="#ff1a1a"/><circle cx="424.4" cy="181.2" r="1.8" fill="#1a1aff"/><circle cx="421.4" cy="178.6" r="1.8" fill="#ff1a1a"/><circle cx="214.6" cy="241.4" r="1.8" fill="#1a1aff"/><circle cx="211.6" cy="238.8" r="1.8" fill="#ff1a1a"/><circle cx="217.1" cy="253.6" r="1.8" fill="#1a1aff"/><circle cx="214.1" cy="251.0" r="1.8" fill="#ff1a1a"/><circle cx="286.0" cy="270.8" r="1.8" fill="#1a1aff"/><circle cx="283.0" cy="268.2" r="1.8" fill="#ff1a1a"/><circle cx="370.0" cy="295.6" r="1.8" fill="#1a1aff"/><circle cx="367.0" cy="293.0" r="1.8" fill="#ff1a1a"/><circle cx="456.6" cy="280.7" r="1.8" fill="#1a1aff"/><circle cx="453.6" cy="278.1" r="1.8" fill="#ff1a1a"/><circle cx="443.6" cy="332.8" r="1.8" fill="#1a1aff"/><circle cx="440.6" cy="330.2" r="1.8" fill="#ff1a1a"/><circle cx="251.4" cy="319.9" r="1.8" fill="#1a1aff"/><circle cx="248.4" cy="317.3" r="1.8" fill="#ff1a1a"/><circle cx="270.2" cy="345.3" r="1.8" fill="#1a1aff"/><circle cx="267.2" cy="342.7" r="1.8" fill="#ff1a1a"/><circle cx="283.4" cy="355.2" r="1.8" fill="#1a1aff"/><circle cx="280.4" cy="352.6" r="1.8" fill="#ff1a1a"/><circle cx="286.3" cy="382.4" r="1.8" fill="#1a1aff"/><circle cx="283.3" cy="379.8" r="1.8" fill="#ff1a1a"/><circle cx="308.1" cy="398.6" r="1.8" fill="#1a1aff"/><circle cx="305.1" cy="396.0" r="1.8" fill="#ff1a1a"/><circle cx="342.8" cy="369.6" r="1.8" fill="#1a1aff"/><circle cx="339.8" cy="367.0" r="1.8" fill="#ff1a1a"/><circle cx="407.9" cy="345.0" r="1.8" fill="#1a1aff"/><circle cx="404.9" cy="342.4" r="1.8" fill="#ff1a1a"/><circle cx="396.1" cy="346.0" r="1.8" fill="#1a1aff"/><circle cx="393.1" cy="343.4" r="1.8" fill="#ff1a1a"/><circle cx="413.3" cy="357.9" r="1.8" fill="#1a1aff"/><circle cx="410.3" cy="355.3" r="1.8" fill="#ff1a1a"/><circle cx="385.0" cy="378.4" r="1.8" fill="#1a1aff"/><circle cx="382.0" cy="375.8" r="1.8" fill="#ff1a1a"/><circle cx="369.6" cy="368.6" r="1.8" fill="#1a1aff"/><circle cx="366.6" cy="366.0" r="1.8" fill="#ff1a1a"/><circle cx="333.8" cy="383.4" r="1.8" fill="#1a1aff"/><circle cx="330.8" cy="380.8" r="1.8" fill="#ff1a1a"/><circle cx="318.9" cy="350.4" r="1.8" fill="#1a1aff"/><circle cx="315.9" cy="347.8" r="1.8" fill="#ff1a1a"/><circle cx="297.79999999999995" cy="170.9" r="3.2" fill="#1a1aff"/><circle cx="296.9" cy="169.5" r="3.2" fill="#ff1a1a"/><circle cx="313.9" cy="175.70000000000002" r="1.8" fill="#1a1aff"/><circle cx="313" cy="174.3" r="1.8" fill="#ff1a1a"/><circle cx="318.4" cy="179.4" r="1.8" fill="#1a1aff"/><circle cx="317.5" cy="178" r="1.8" fill="#ff1a1a"/><circle cx="310.4" cy="180.1" r="1.8" fill="#1a1aff"/><circle cx="309.5" cy="178.7" r="1.8" fill="#ff1a1a"/><circle cx="313.59999999999997" cy="187.1" r="1.8" fill="#1a1aff"/><circle cx="312.7" cy="185.7" r="1.8" fill="#ff1a1a"/><circle cx="313.29999999999995" cy="195.4" r="1.8" fill="#1a1aff"/><circle cx="312.4" cy="194" r="1.8" fill="#ff1a1a"/><circle cx="324.9" cy="211.4" r="1.8" fill="#1a1aff"/><circle cx="324" cy="210" r="1.8" fill="#ff1a1a"/><circle cx="308.4" cy="221.20000000000002" r="1.8" fill="#1a1aff"/><circle cx="307.5" cy="219.8" r="1.8" fill="#ff1a1a"/><circle cx="313.7" cy="232.4" r="1.8" fill="#1a1aff"/><circle cx="312.8" cy="231" r="1.8" fill="#ff1a1a"/><circle cx="309.5" cy="243.4" r="1.8" fill="#1a1aff"/><circle cx="308.6" cy="242" r="1.8" fill="#ff1a1a"/><circle cx="288.5" cy="235.4" r="1.8" fill="#1a1aff"/><circle cx="287.6" cy="234" r="1.8" fill="#ff1a1a"/><circle cx="333.5" cy="261.09999999999997" r="1.8" fill="#1a1aff"/><circle cx="332.6" cy="259.7" r="1.8" fill="#ff1a1a"/><circle cx="315.4" cy="276.0" r="1.8" fill="#1a1aff"/><circle cx="314.5" cy="274.6" r="1.8" fill="#ff1a1a"/><circle cx="310.5" cy="287.09999999999997" r="1.8" fill="#1a1aff"/><circle cx="309.6" cy="285.7" r="1.8" fill="#ff1a1a"/><circle cx="301.4" cy="305.9" r="1.8" fill="#1a1aff"/><circle cx="300.5" cy="304.5" r="1.8" fill="#ff1a1a"/><circle cx="308.0" cy="326.4" r="1.8" fill="#1a1aff"/><circle cx="307.1" cy="325" r="1.8" fill="#ff1a1a"/><circle cx="316.9" cy="328.4" r="1.8" fill="#1a1aff"/><circle cx="316" cy="327" r="1.8" fill="#ff1a1a"/><circle cx="333.9" cy="328.4" r="1.8" fill="#1a1aff"/><circle cx="333" cy="327" r="1.8" fill="#ff1a1a"/><circle cx="302.9" cy="352.4" r="1.8" fill="#1a1aff"/><circle cx="302" cy="351" r="1.8" fill="#ff1a1a"/><circle cx="319.9" cy="367.4" r="1.8" fill="#1a1aff"/><circle cx="319" cy="366" r="1.8" fill="#ff1a1a"/><circle cx="321.9" cy="385.4" r="1.8" fill="#1a1aff"/><circle cx="321" cy="384" r="1.8" fill="#ff1a1a"/><circle cx="377.9" cy="234.4" r="1.8" fill="#1a1aff"/><circle cx="377" cy="233" r="1.8" fill="#ff1a1a"/><circle cx="408.4" cy="271.2" r="1.8" fill="#1a1aff"/><circle cx="407.5" cy="269.8" r="1.8" fill="#ff1a1a"/><circle cx="423.29999999999995" cy="294.59999999999997" r="1.8" fill="#1a1aff"/><circle cx="422.4" cy="293.2" r="1.8" fill="#ff1a1a"/><circle cx="359.29999999999995" cy="325.09999999999997" r="1.8" fill="#1a1aff"/><circle cx="358.4" cy="323.7" r="1.8" fill="#ff1a1a"/><circle cx="346.7" cy="353.4" r="1.8" fill="#1a1aff"/><circle cx="345.8" cy="352" r="1.8" fill="#ff1a1a"/><circle cx="378.29999999999995" cy="322.4" r="1.8" fill="#1a1aff"/><circle cx="377.4" cy="321" r="1.8" fill="#ff1a1a"/>
   <path d="M150 335l6 3.5M161 346c-2.5 0-3.5-4-3-6.5s3-2.5 4.5 0.5 1 6-1.5 6" fill="none" stroke="#10c010" stroke-width="1.2"/>
   <path d="M166 345.5l3 1.5-2.5 1.2" fill="#fff" stroke="#fff" stroke-width="1"/>
   <path d="M43.5 475v15.5M43.5 485c-1-3-4-4-6.2-3s-2.6 5-1 7.5 5 2 7-0.5M46 484l9-3" fill="none" stroke="#1010d0" stroke-width="1.3"/>
   <path d="M67 481l6-3.5 1.5 2.5z" fill="#fff"/>
   <path d="M596.5 364.5v16M596.5 372c-1-2-3.5-3-5.5-2s-3 5-1.5 8 4.5 2.5 7-0.5" fill="none" stroke="#c8c010" stroke-width="1.3"/>
   <path d="M573 376.5l6 1-5 3z" fill="#fff"/>
   <path d="M487 512c-1.5 3 0 9 2.5 10.5M491.5 511.5v11.5" fill="none" stroke="#d01010" stroke-width="1.3"/>
   <path d="M475 509l5 3-4.5 1.5z" fill="#fff"/>
  </svg>
 </div>
</div>
</body></html>
